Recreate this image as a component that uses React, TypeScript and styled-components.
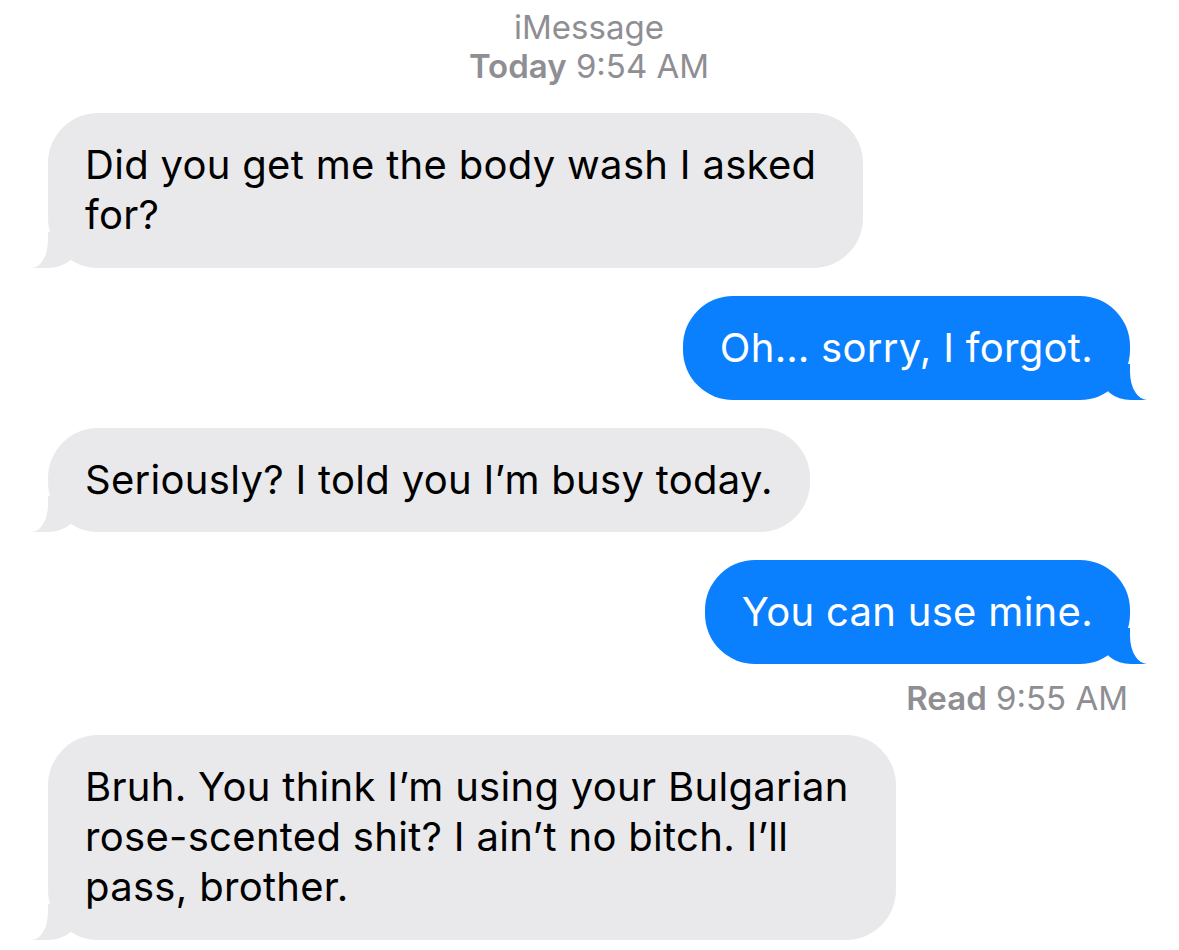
import React from "react";
import styled, { createGlobalStyle, css } from "styled-components";

const Global = createGlobalStyle`
  html, body { margin: 0; padding: 0; background: #ffffff; }
  body { font-family: Inter, "Noto Sans", "Liberation Sans", sans-serif; -webkit-font-smoothing: antialiased; }
`;

const Screen = styled.div`
  width: 1179px;
  height: 950px;
  overflow: hidden;
  box-sizing: border-box;
  padding: 8px 49px 0 48px;
  display: flex;
  flex-direction: column;
  background: #ffffff;
`;

const Header = styled.div`
  display: flex;
  flex-direction: column;
  align-items: center;
  color: #8e8e93;
  font-size: 33px;
  line-height: 39px;
  margin-bottom: 27px;
`;

const Strong = styled.span`
  font-weight: 600;
`;

const Row = styled.div<{ $sent?: boolean }>`
  display: flex;
  justify-content: ${(p) => (p.$sent ? "flex-end" : "flex-start")};
  margin-bottom: 28px;
`;

const Bubble = styled.div<{ $sent?: boolean; $multi?: boolean }>`
  position: relative;
  box-sizing: border-box;
  padding: 27px ${(p) => (p.$multi ? "47px" : "37px")} ${(p) => (p.$multi ? "28px" : "27px")} 37px;
  border-radius: 50px;
  font-size: 40px;
  line-height: 50px;
  letter-spacing: 0.3px;
  white-space: pre-line;
  ${(p) =>
    p.$sent
      ? css`
          background: #0a80ff;
          color: #ffffff;
          &::before {
            content: "";
            position: absolute;
            bottom: 0;
            right: -17px;
            width: 46px;
            height: 36px;
            background: #0a80ff;
            border-bottom-left-radius: 30px 24px;
          }
          &::after {
            content: "";
            position: absolute;
            bottom: 0;
            right: -30px;
            width: 30px;
            height: 36px;
            background: #ffffff;
            border-bottom-left-radius: 17px 28px;
          }
        `
      : css`
          background: #e9e9eb;
          color: #000000;
          &::before {
            content: "";
            position: absolute;
            bottom: 0;
            left: -16px;
            width: 46px;
            height: 36px;
            background: #e9e9eb;
            border-bottom-right-radius: 30px 24px;
          }
          &::after {
            content: "";
            position: absolute;
            bottom: 0;
            left: -30px;
            width: 30px;
            height: 36px;
            background: #ffffff;
            border-bottom-right-radius: 16px 28px;
          }
        `}
`;

const BubbleText = styled.span`
  position: relative;
  z-index: 2;
`;

const Receipt = styled.div`
  align-self: flex-end;
  margin: -13px 2px 18px 0;
  color: #8e8e93;
  font-size: 33px;
  line-height: 38px;
`;

type Msg = { text: string; sent?: boolean };

const messages: Msg[] = [
  { text: "Did you get me the body wash I asked\nfor?" },
  { text: "Oh… sorry, I forgot.", sent: true },
  { text: "Seriously? I told you I’m busy today." },
  { text: "You can use mine.", sent: true },
];

const last = "Bruh. You think I’m using your Bulgarian\nrose-scented shit? I ain’t no bitch. I’ll\npass, brother.";

export default function App() {
  return (
    <>
      <Global />
      <Screen>
        <Header>
          <span>iMessage</span>
          <span>
            <Strong>Today</Strong> 9:54 AM
          </span>
        </Header>
        {messages.map((m, i) => (
          <Row key={i} $sent={m.sent}>
            <Bubble $sent={m.sent} $multi={m.text.includes("\n")}>
              <BubbleText>{m.text}</BubbleText>
            </Bubble>
          </Row>
        ))}
        <Receipt>
          <Strong>Read</Strong> 9:55 AM
        </Receipt>
        <Row>
          <Bubble $multi>
            <BubbleText>{last}</BubbleText>
          </Bubble>
        </Row>
      </Screen>
    </>
  );
}
